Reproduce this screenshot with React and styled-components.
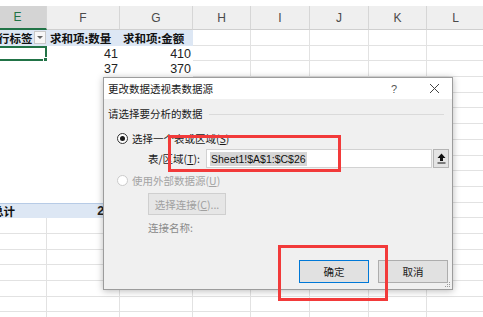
import React from 'react';
import styled, { createGlobalStyle, css } from 'styled-components';

const COLS = '58px 73px 73px 58px 59px 59px 58px 58px';
const ROW_H = 15.7;
const GRID = '#e2e2e2';
const PIVOT_BLUE = '#dde7f4';

const Global = createGlobalStyle`
  html, body { margin: 0; padding: 0; background: #fff; }
  body { font-family: "Liberation Sans", "Noto Sans CJK SC", sans-serif; }
`;

const Page = styled.div`
  position: relative;
  width: 483px;
  height: 317px;
  overflow: hidden;
  background: #fff;
`;

const TopStrip = styled.div`
  height: 6px;
  background: #fff;
`;

const Sheet = styled.div`
  margin-left: -11px;
  display: flex;
  flex-direction: column;
`;

const HeaderRow = styled.div`
  display: grid;
  grid-template-columns: ${COLS};
  height: 24px;
  background: #efefef;
`;

const ColHead = styled.div`
  display: flex;
  align-items: center;
  justify-content: center;
  box-sizing: border-box;
  border-right: 1px solid #d6d6d6;
  border-bottom: ${(p) => (p.$active ? '2px solid #217346' : '1px solid #cfcfcf')};
  background: ${(p) => (p.$active ? '#d4d4d4' : '#efefef')};
  color: ${(p) => (p.$active ? '#217346' : '#4a4a4a')};
  font-size: 12px;
`;

const Row = styled.div`
  display: grid;
  grid-template-columns: ${COLS};
  height: ${ROW_H}px;
`;

const Cell = styled.div`
  position: relative;
  box-sizing: border-box;
  height: 100%;
  display: flex;
  align-items: center;
  justify-content: ${(p) => (p.$right ? 'flex-end' : 'flex-start')};
  padding: 0 ${(p) => p.$pr ?? 2}px 0 ${(p) => p.$pl ?? 2}px;
  white-space: nowrap;
  overflow: hidden;
  font-size: 12.5px;
  color: #222;
  background: ${(p) => (p.$blue ? PIVOT_BLUE : '#fff')};
  ${(p) =>
    p.$grid &&
    css`
      border-right: 1px solid ${GRID};
      border-bottom: 1px solid ${GRID};
    `}
  ${(p) =>
    p.$total &&
    css`
      border-top: 1px solid #b7cbe6;
    `}
  ${(p) =>
    p.$head &&
    css`
      font-family: "Noto Sans CJK SC", sans-serif;
      font-size: 11.5px;
      font-weight: 700;
      color: #111;
    `}
  ${(p) =>
    p.$selected &&
    css`
      overflow: visible;
      box-shadow: inset 0 0 0 2px #217346;
      &::after {
        content: '';
        position: absolute;
        right: -3px;
        bottom: -3px;
        width: 5px;
        height: 5px;
        background: #217346;
        border: 1px solid #fff;
      }
    `}
`;

const Dropdown = styled.div`
  position: absolute;
  right: 1px;
  top: 1px;
  width: 12px;
  height: 13px;
  box-sizing: border-box;
  border: 1px solid #c9c9c9;
  background: #f7f7f7;
  display: flex;
  align-items: center;
  justify-content: center;
  &::before {
    content: '';
    border-left: 3px solid transparent;
    border-right: 3px solid transparent;
    border-top: 3px solid #666;
  }
`;

/* dialog */

const Dialog = styled.div`
  position: absolute;
  left: 103px;
  top: 77px;
  width: 350px;
  height: 213px;
  box-sizing: border-box;
  border: 1px solid #9c9c9c;
  background: #f0f0f0;
  box-shadow: 0 1px 7px rgba(0, 0, 0, 0.28);
  display: flex;
  flex-direction: column;
  font-family: "Noto Sans CJK SC", sans-serif;
  font-size: 10.5px;
  color: #1a1a1a;
`;

const TitleBar = styled.div`
  height: 21px;
  background: #fff;
  display: flex;
  align-items: center;
  padding: 0 11px 0 4px;
`;

const Title = styled.div`
  flex: 1;
`;

const TitleBtn = styled.div`
  width: 14px;
  height: 14px;
  display: flex;
  align-items: center;
  justify-content: center;
  color: #555;
  font-family: "Liberation Sans", sans-serif;
  font-size: 11px;
  margin-left: ${(p) => p.$gap || 0}px;
`;

const GroupHead = styled.div`
  display: flex;
  align-items: center;
  padding: 9px 8px 0 4px;
  height: 12px;
  line-height: 12px;
  &::after {
    content: '';
    flex: 1;
    height: 1px;
    margin-left: 6px;
    background: #dadada;
  }
`;

const RadioRow = styled.div`
  display: flex;
  align-items: center;
  gap: 4px;
  height: 14px;
  margin: ${(p) => p.$mt}px 0 0 13px;
  color: ${(p) => (p.$disabled ? '#a3a3a3' : '#1a1a1a')};
`;

const Radio = styled.span`
  width: 11px;
  height: 11px;
  box-sizing: border-box;
  border-radius: 50%;
  border: 1px solid ${(p) => (p.$disabled ? '#cbcbcb' : '#333')};
  background: #fff;
  display: flex;
  align-items: center;
  justify-content: center;
  &::after {
    content: '';
    width: 5px;
    height: 5px;
    border-radius: 50%;
    background: ${(p) => (p.$checked ? '#1a1a1a' : 'transparent')};
  }
`;

const Key = styled.span`
  text-decoration: underline;
`;

const RangeRow = styled.div`
  display: flex;
  align-items: center;
  height: 19px;
  margin-top: 4px;
  padding-left: 44px;
`;

const RangeLabel = styled.div`
  width: 58px;
`;

const RangeInput = styled.div`
  width: 226px;
  height: 19px;
  box-sizing: border-box;
  border: 1px solid #d2d2d2;
  background: #fff;
  display: flex;
  align-items: center;
  padding-left: 3px;
`;

const Selected = styled.span`
  background: #d6d6d6;
  color: #111;
  font-family: "Liberation Sans", sans-serif;
  font-size: 10.5px;
  line-height: 14px;
  padding: 0 1px;
`;

const CollapseBtn = styled.div`
  width: 16px;
  height: 19px;
  margin-left: 1px;
  box-sizing: border-box;
  border: 1px solid #b4b4b4;
  background: #e4e4e4;
  display: flex;
  align-items: center;
  justify-content: center;
`;

const PlainBtn = styled.div`
  box-sizing: border-box;
  width: ${(p) => p.$w}px;
  height: ${(p) => p.$h}px;
  display: flex;
  align-items: center;
  justify-content: center;
  background: ${(p) => (p.$disabled ? '#e6e6e6' : '#e1e1e1')};
  border: 1px solid ${(p) => (p.$primary ? '#0078d7' : p.$disabled ? '#cfcfcf' : '#adadad')};
  color: ${(p) => (p.$disabled ? '#a0a0a0' : '#1a1a1a')};
`;

const Indented = styled.div`
  margin: ${(p) => p.$mt}px 0 0 44px;
  color: ${(p) => p.$color || 'inherit'};
`;

const Footer = styled.div`
  margin-top: auto;
  display: flex;
  justify-content: flex-end;
  gap: 9px;
  padding: 0 4px 6px 0;
`;

const Grip = styled.svg`
  position: absolute;
  right: 1px;
  bottom: 1px;
`;

const Annotation = styled.div`
  position: absolute;
  left: ${(p) => p.$x}px;
  top: ${(p) => p.$y}px;
  width: ${(p) => p.$w}px;
  height: ${(p) => p.$h}px;
  box-sizing: border-box;
  border: 3px solid #f23a3a;
`;

const letters = ['E', 'F', 'G', 'H', 'I', 'J', 'K', 'L'];

const values = [
  [41, 410],
  [37, 370],
  [25, 250],
  [30, 300],
  [18, 180],
  [22, 220],
  [35, 350],
  [28, 280],
  [20, 200],
  [30, 300],
];
const total = values.reduce((s, v) => s + v[0], 0);

const GridTail = () =>
  [0, 1, 2, 3, 4].map((i) => <Cell key={i} $grid />);

const CollapseIcon = () => (
  <svg width="9" height="11" viewBox="0 0 9 11">
    <path d="M4.5 0.5 L8.5 5 L6 5 L6 8 L3 8 L3 5 L0.5 5 Z" fill="#111" />
    <rect x="0.5" y="9.5" width="8" height="1" fill="#111" />
  </svg>
);

const CloseIcon = () => (
  <svg width="11" height="11" viewBox="0 0 11 11">
    <path d="M1 1 L10 10 M10 1 L1 10" stroke="#444" strokeWidth="1" />
  </svg>
);

const App = () => {
  const emptyRows = Array.from({ length: 7 });
  return (
    <Page>
      <Global />
      <TopStrip />
      <Sheet>
        <HeaderRow>
          {letters.map((l, i) => (
            <ColHead key={l} $active={i === 0}>
              {l}
            </ColHead>
          ))}
        </HeaderRow>

        {/* pivot header */}
        <Row>
          <Cell $blue $head $pl={9}>
            行标签
            <Dropdown />
          </Cell>
          <Cell $blue $head $pl={3}>求和项:数量</Cell>
          <Cell $blue $head $pl={3}>求和项:金额</Cell>
          <GridTail />
        </Row>

        {/* pivot values */}
        {values.map(([q, m], i) => (
          <Row key={i}>
            <Cell $selected={i === 0} />
            <Cell $right>{q}</Cell>
            <Cell $right>{m}</Cell>
            <GridTail />
          </Row>
        ))}

        {/* grand total */}
        <Row>
          <Cell $blue $total $head $pl={3}>总计</Cell>
          <Cell $blue $total $right>
            <b>{total}</b>
          </Cell>
          <Cell $blue $total $right>
            <b>{total * 10}</b>
          </Cell>
          <GridTail />
        </Row>

        {emptyRows.map((_, i) => (
          <Row key={`e${i}`}>
            <Cell $grid />
            <Cell $grid />
            <Cell $grid />
            <GridTail />
          </Row>
        ))}
      </Sheet>

      <Dialog>
        <TitleBar>
          <Title>更改数据透视表数据源</Title>
          <TitleBtn>?</TitleBtn>
          <TitleBtn $gap={26}>
            <CloseIcon />
          </TitleBtn>
        </TitleBar>

        <GroupHead>请选择要分析的数据</GroupHead>

        <RadioRow $mt={11}>
          <Radio $checked />
          <span>
            选择一个表或区域(<Key>S</Key>)
          </span>
        </RadioRow>

        <RangeRow>
          <RangeLabel>
            表/区域(<Key>T</Key>):
          </RangeLabel>
          <RangeInput>
            <Selected>Sheet1!$A$1:$C$26</Selected>
          </RangeInput>
          <CollapseBtn>
            <CollapseIcon />
          </CollapseBtn>
        </RangeRow>

        <RadioRow $mt={5} $disabled>
          <Radio $disabled />
          <span>
            使用外部数据源(<Key>U</Key>)
          </span>
        </RadioRow>

        <Indented $mt={6}>
          <PlainBtn $w={78} $h={22} $disabled>
            选择连接(<Key>C</Key>)...
          </PlainBtn>
        </Indented>
        <Indented $mt={5} $color="#8a8a8a">连接名称:</Indented>

        <Footer>
          <PlainBtn $w={70} $h={23} $primary>确定</PlainBtn>
          <PlainBtn $w={70} $h={23}>取消</PlainBtn>
        </Footer>

        <Grip width="8" height="8" viewBox="0 0 8 8">
          {[
            [6, 2],
            [6, 4],
            [4, 4],
            [6, 6],
            [4, 6],
            [2, 6],
          ].map(([x, y]) => (
            <rect key={`${x}-${y}`} x={x} y={y} width="1" height="1" fill="#9a9a9a" />
          ))}
        </Grip>
      </Dialog>

      <Annotation $x={168} $y={135} $w={173} $h={37} />
      <Annotation $x={278} $y={245} $w={110} $h={56} />
    </Page>
  );
};

export default App;
